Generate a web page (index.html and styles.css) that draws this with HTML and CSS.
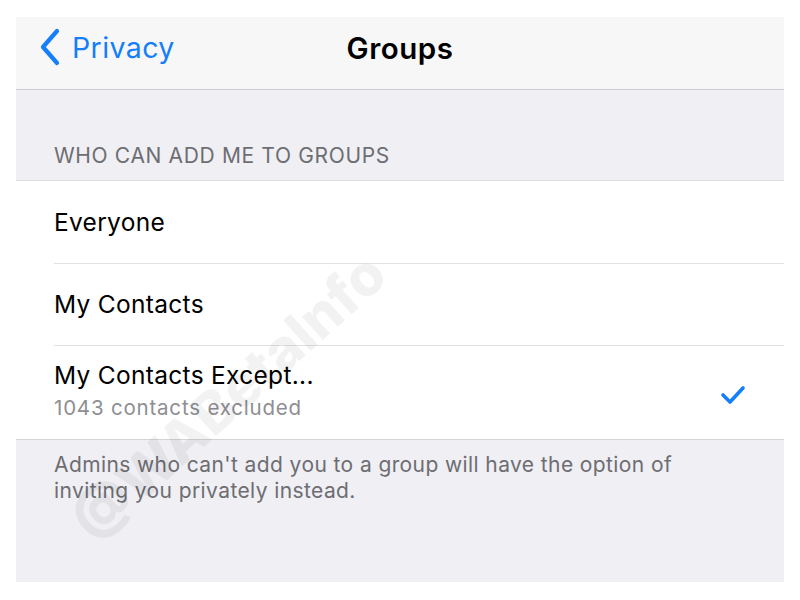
FILE: index.html
```html
<!DOCTYPE html>
<html lang="en">
<head>
    <meta charset="UTF-8">
    <meta name="viewport" content="width=device-width, initial-scale=1.0">
    <link rel="stylesheet" href="styles.css">
    <title>Groups</title>
</head>
<body>
    <div class="screen">
        <div class="navbar">
            <a class="back" href="#">
                <svg class="chevron" width="24" height="38" viewBox="0 0 24 38">
                    <path d="M19 3 L5 19 L19 35" fill="none" stroke="#147efb" stroke-width="4.2" stroke-linecap="round" stroke-linejoin="round"/>
                </svg>
                <span>Privacy</span>
            </a>
            <h1 class="nav-title">Groups</h1>
        </div>

        <p class="section-header">WHO CAN ADD ME TO GROUPS</p>

        <ul class="options">
            <li class="option">
                <span class="option-label">Everyone</span>
            </li>
            <li class="option">
                <span class="option-label">My Contacts</span>
            </li>
            <li class="option option-tall">
                <div class="option-text">
                    <span class="option-label">My Contacts Except...</span>
                    <span class="option-sub">1043 contacts excluded</span>
                </div>
                <svg class="check" width="26" height="20" viewBox="0 0 26 20">
                    <path d="M3 10 L10 17 L23 3" fill="none" stroke="#147efb" stroke-width="3.6" stroke-linecap="round" stroke-linejoin="round"/>
                </svg>
            </li>
        </ul>

        <p class="section-footer">Admins who can't add you to a group will have the option of inviting you privately instead.</p>

        <div class="watermark">@WABetaInfo</div>
    </div>
</body>
</html>
```

FILE: styles.css
```css
* {
    margin: 0;
    padding: 0;
    box-sizing: border-box;
}

body {
    background-color: #fff;
    font-family: 'Inter', 'Roboto', sans-serif;
    padding: 17px 16px 18px;
}

.screen {
    position: relative;
    height: 565px;
    background-color: #efeff4;
    overflow: hidden;
}

/* Top navigation bar */
.navbar {
    position: relative;
    height: 73px;
    background-color: #f7f7f7;
    border-bottom: 1px solid #cdcdd1;
    display: flex;
    align-items: center;
    justify-content: center;
}

.back {
    position: absolute;
    left: 22px;
    top: 11px;
    display: flex;
    align-items: center;
    gap: 10px;
    color: #147efb;
    text-decoration: none;
    font-size: 28.5px;
    letter-spacing: 0.4px;
}

.nav-title {
    font-size: 29.5px;
    font-weight: 600;
    color: #000;
    letter-spacing: 0.5px;
    margin-top: -10px;
}

.section-header {
    padding: 53px 38px 11px;
    font-size: 21px;
    line-height: 26px;
    color: #6d6d72;
    letter-spacing: 0.65px;
}

/* Option list */
.options {
    list-style: none;
    background-color: #fff;
    border-top: 1px solid #dcdce0;
    border-bottom: 1px solid #d4d4d8;
}

.option {
    position: relative;
    height: 82px;
    display: flex;
    align-items: center;
    padding: 0 38px;
}

.option + .option::before {
    content: "";
    position: absolute;
    top: 0;
    left: 38px;
    right: 0;
    border-top: 1px solid #e2e2e6;
}

.option-tall {
    height: 94px;
    justify-content: space-between;
}

.option-text {
    display: flex;
    flex-direction: column;
    margin-top: -4px;
}

.option-label {
    font-size: 24.5px;
    color: #000;
    letter-spacing: 0.3px;
}

.option-sub {
    font-size: 20.5px;
    color: #8e8e93;
    margin-top: 5px;
    letter-spacing: 0.8px;
}

.check {
    margin-top: 6px;
}

.section-footer {
    padding: 12px 38px;
    font-size: 21px;
    line-height: 26px;
    color: #6d6d72;
    letter-spacing: 0.4px;
}

/* Faint watermark over the content */
.watermark {
    position: absolute;
    left: 66px;
    top: 478px;
    font-size: 57px;
    line-height: 70px;
    font-weight: 800;
    color: rgba(0, 0, 0, 0.05);
    transform: rotate(-42deg);
    transform-origin: left center;
    white-space: nowrap;
    pointer-events: none;
}
```
